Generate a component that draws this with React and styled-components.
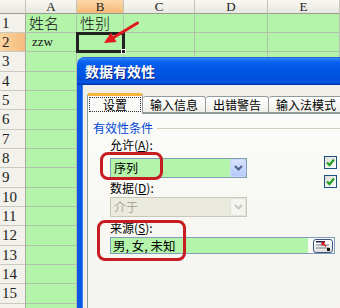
import React from 'react';
import styled, { createGlobalStyle } from 'styled-components';

const Global = createGlobalStyle`
  html, body { margin: 0; padding: 0; width: 340px; height: 308px; overflow: hidden; background: #fff; }
  #root { width: 340px; height: 308px; }
  * { box-sizing: border-box; }
`;

const Stage = styled.div`
  position: relative;
  width: 340px;
  height: 308px;
  overflow: hidden;
  font-family: "Noto Sans CJK SC", sans-serif;
`;

const Sheet = styled.div`
  display: grid;
  grid-template-columns: 26px 51px 47px 71px 73px 72px;
  grid-template-rows: 14px repeat(6, 19px 19px 20px);
  width: 340px;
`;

const ColHead = styled.div`
  background: ${p => (p.$active ? 'linear-gradient(#fcd9a9, #f5b878)' : 'linear-gradient(#f8f7f2, #e9e8df)')};
  border-right: 1px solid #c6c5b9;
  border-bottom: 1px solid #9d9c90;
  font: 13px/13px "Liberation Serif", serif;
  text-align: center;
  color: #222;
  overflow: hidden;
`;

const RowHead = styled.div`
  background: ${p => (p.$active ? 'linear-gradient(90deg, #fbd3a0, #f6bb7c)' : '#f2f1eb')};
  border-right: 1px solid #a9a89c;
  border-bottom: 1px solid #cac9bd;
  font: 15px/1 "Liberation Serif", serif;
  color: #222;
  display: flex;
  align-items: center;
  padding-left: 2px;
  overflow: hidden;
`;

const Cell = styled.div`
  background: #b4f4aa;
  border-right: 1px solid #b3c2ad;
  border-bottom: 1px solid #b3c2ad;
  display: flex;
  align-items: flex-end;
  padding: 0 0 1px ${p => (p.$latin ? '6px' : '3px')};
  white-space: nowrap;
  color: #111;
  font-family: ${p => (p.$latin ? '"Liberation Serif", serif' : '"Noto Sans CJK SC", sans-serif')};
  font-size: ${p => (p.$latin ? '13px' : '15px')};
  font-weight: ${p => (p.$latin ? 400 : 300)};
  line-height: 16px;
`;

const Selection = styled.div`
  position: absolute;
  left: 76px;
  top: 32px;
  width: 49px;
  height: 21px;
  border: 3px solid #222;
`;

const Handle = styled.div`
  position: absolute;
  right: -4px;
  bottom: -4px;
  width: 5px;
  height: 5px;
  background: #222;
  border: 1px solid #fff;
`;

const Overlay = styled.svg`
  position: absolute;
  left: 0;
  top: 0;
  pointer-events: none;
`;

const Dialog = styled.div`
  position: absolute;
  left: 77px;
  top: 57px;
  width: 290px;
  height: 260px;
  display: flex;
  flex-direction: column;
  font-family: "Noto Sans CJK SC", sans-serif;
  font-size: 12px;
  color: #000;
`;

const TitleBar = styled.div`
  height: 28px;
  flex: none;
  border-radius: 7px 7px 0 0;
  background: linear-gradient(to bottom, #0b3fb8 0, #3a8cf8 1px, #1a70f2 3px, #0860ee 6px, #0057e6 12px, #0054e2 18px, #004dd8 23px, #0a5ae6 25px, #003cc0 27px, #00309c 28px);
  color: #fff;
  font-weight: 700;
  font-size: 14px;
  display: flex;
  align-items: center;
  padding-left: 8px;
  text-shadow: 1px 1px 0 #0c2a8a;
`;

const Frame = styled.div`
  flex: 1;
  display: flex;
  flex-direction: column;
  background: #f1f0e8;
  border-left: 5px solid #0b58e4;
  box-shadow: inset 1px 0 0 #3b7ff0;
  padding: 8px 0 0 5px;
`;

const Tabs = styled.div`
  display: flex;
  align-items: flex-end;
  height: 20px;
  position: relative;
  z-index: 1;
`;

const Tab = styled.div`
  height: ${p => (p.$active ? '21px' : '17px')};
  margin-bottom: ${p => (p.$active ? '-1px' : '0')};
  padding: ${p => (p.$active ? '1px 1px 0' : '0 7px')};
  border: 1px solid #919b9c;
  border-bottom: ${p => (p.$active ? 'none' : '1px solid #919b9c')};
  border-top: ${p => (p.$active ? '3px solid #f5b53c' : '1px solid #919b9c')};
  border-left-width: ${p => (p.$first || p.$active ? '1px' : '0')};
  border-radius: 3px 3px 0 0;
  background: ${p => (p.$active ? '#fbfbf9' : 'linear-gradient(#ffffff, #efeee8)')};
  display: flex;
  align-items: ${p => (p.$active ? 'flex-start' : 'center')};
  white-space: nowrap;
  line-height: 14px;
`;

const Focus = styled.span`
  border: 1px dotted #333;
  padding: 0 13px;
  height: 15px;
  display: flex;
  align-items: center;
`;

const Page = styled.div`
  flex: 1;
  border: 1px solid #919b9c;
  background: linear-gradient(#fbfbf9, #f4f3ee);
  padding: 7px 0 0 5px;
  display: flex;
  flex-direction: column;
`;

const GroupHead = styled.div`
  display: flex;
  align-items: center;
  gap: 4px;
  height: 14px;
  color: #0046d5;
  line-height: 14px;
  &::after {
    content: '';
    flex: 1;
    height: 1px;
    background: #d0d0bf;
    margin-top: 1px;
  }
`;

const Settings = styled.div`
  display: flex;
  padding-left: 17px;
`;

const Stack = styled.div`
  width: 137px;
  display: flex;
  flex-direction: column;
`;

const Label = styled.div`
  height: 14px;
  line-height: 14px;
  margin-top: ${p => p.$mt || 0}px;
  white-space: nowrap;
`;

const Combo = styled.div`
  height: 20px;
  margin-top: ${p => p.$mt || 0}px;
  border: 1px solid ${p => (p.$disabled ? '#c9c7ba' : '#7f9db9')};
  background: ${p => (p.$disabled ? '#ebeadf' : '#b4f4aa')};
  color: ${p => (p.$disabled ? '#aca899' : '#000')};
  display: flex;
  align-items: center;
`;

const ComboText = styled.span`
  flex: 1;
  padding-left: 3px;
  line-height: 14px;
`;

const DropBtn = styled.div`
  width: 16px;
  align-self: stretch;
  border: 1px solid ${p => (p.$disabled ? '#e4e3dc' : '#c8d7fc')};
  border-radius: 2px;
  background: ${p => (p.$disabled ? '#f4f4f0' : 'linear-gradient(#d6e2fe, #b6c9f9)')};
  display: flex;
  align-items: center;
  justify-content: center;
`;

const Checks = styled.div`
  margin-left: 77px;
  padding-top: 21px;
  display: flex;
  flex-direction: column;
  gap: 6px;
`;

const CheckBox = styled.div`
  width: 13px;
  height: 13px;
  border: 1px solid #1c5180;
  background: linear-gradient(135deg, #dcdcd7, #ffffff);
  display: flex;
  align-items: center;
  justify-content: center;
`;

const Source = styled.div`
  margin: 2px 0 0 17px;
  width: 225px;
  height: 17px;
  border: 1px solid #7f9db9;
  background: #f8f8f5;
  display: flex;
  align-items: center;
`;

const SourceText = styled.div`
  width: 197px;
  height: 100%;
  background: #b4f4aa;
  padding-left: 2px;
  display: flex;
  align-items: center;
  white-space: nowrap;
  font-size: 12.5px;
`;

const RefBtn = styled.div`
  margin-left: 5px;
  width: 20px;
  height: 14px;
  border: 1px solid #3c5684;
  border-radius: 3px;
  background: linear-gradient(#ffffff, #e3e2da);
  display: flex;
  align-items: center;
  justify-content: center;
`;

const Mark = styled.div`
  position: absolute;
  left: ${p => p.$x}px;
  top: ${p => p.$y}px;
  width: ${p => p.$w}px;
  height: ${p => p.$h}px;
  border: 3px solid #c71c22;
  border-radius: 8px;
`;

const cols = ['A', 'B', 'C', 'D', 'E'];
const data = {
  1: [['姓名'], ['性别']],
  2: [['zzw', true]],
};

function Chevron({ color }) {
  return (
    <svg width="9" height="6" viewBox="0 0 9 6">
      <path d="M1 1 L4.5 4.5 L8 1" fill="none" stroke={color} strokeWidth="2" />
    </svg>
  );
}

function Check() {
  return (
    <svg width="9" height="9" viewBox="0 0 9 9">
      <path d="M1 4.5 L3.5 7 L8 1.5" fill="none" stroke="#21a121" strokeWidth="2.2" />
    </svg>
  );
}

export default function App() {
  const rows = [];
  for (let r = 1; r <= 17; r++) {
    rows.push(
      <RowHead key={`h${r}`} $active={r === 2}>{r}</RowHead>
    );
    cols.forEach((c, i) => {
      const v = data[r] && data[r][i];
      rows.push(
        <Cell key={`${r}${c}`} $latin={v && v[1]}>{v ? v[0] : ''}</Cell>
      );
    });
  }
  return (
    <Stage>
      <Global />
      <Sheet>
        <ColHead />
        {cols.map(c => (
          <ColHead key={c} $active={c === 'B'}>{c}</ColHead>
        ))}
        {rows}
      </Sheet>
      <Selection>
        <Handle />
      </Selection>
      <Overlay width="340" height="308" viewBox="0 0 340 308">
        <path d="M137.5 23 L113.5 37.5" stroke="#e3181c" strokeWidth="3" strokeLinecap="round" />
        <polygon points="104,43 111,32.5 116.5,42" fill="#e3181c" />
      </Overlay>
      <Dialog>
        <TitleBar>数据有效性</TitleBar>
        <Frame>
          <Tabs>
            <Tab $active $first><Focus>设置</Focus></Tab>
            <Tab>输入信息</Tab>
            <Tab>出错警告</Tab>
            <Tab>输入法模式</Tab>
          </Tabs>
          <Page>
            <GroupHead>有效性条件</GroupHead>
            <Settings>
              <Stack>
                <Label $mt={3}>允许(<u>A</u>):</Label>
                <Combo $mt={6}>
                  <ComboText>序列</ComboText>
                  <DropBtn><Chevron color="#4d6185" /></DropBtn>
                </Combo>
                <Label $mt={3}>数据(<u>D</u>):</Label>
                <Combo $mt={2} $disabled>
                  <ComboText>介于</ComboText>
                  <DropBtn $disabled><Chevron color="#c9c8c0" /></DropBtn>
                </Combo>
                <Label $mt={4}>来源(<u>S</u>):</Label>
              </Stack>
              <Checks>
                <CheckBox><Check /></CheckBox>
                <CheckBox><Check /></CheckBox>
              </Checks>
            </Settings>
            <Source>
              <SourceText>男, 女, 未知</SourceText>
              <RefBtn>
                <svg width="16" height="11" viewBox="0 0 16 11">
                  <rect x="1" y="1" width="9" height="1.5" fill="#1c2a5a" />
                  <rect x="1" y="4.5" width="13" height="1" fill="#7a8090" />
                  <rect x="1" y="7.5" width="13" height="1" fill="#7a8090" />
                  <path d="M7 2.5 L11 6.5 M7 2.5 L7 5.5 M7 2.5 L10 2.5" stroke="#d21a1a" strokeWidth="1.4" fill="none" />
                  <rect x="12" y="8" width="3" height="3" fill="#111" />
                </svg>
              </RefBtn>
            </Source>
          </Page>
        </Frame>
      </Dialog>
      <Mark $x={100} $y={152} $w={63} $h={28} />
      <Mark $x={97} $y={220} $w={89} $h={41} />
    </Stage>
  );
}
